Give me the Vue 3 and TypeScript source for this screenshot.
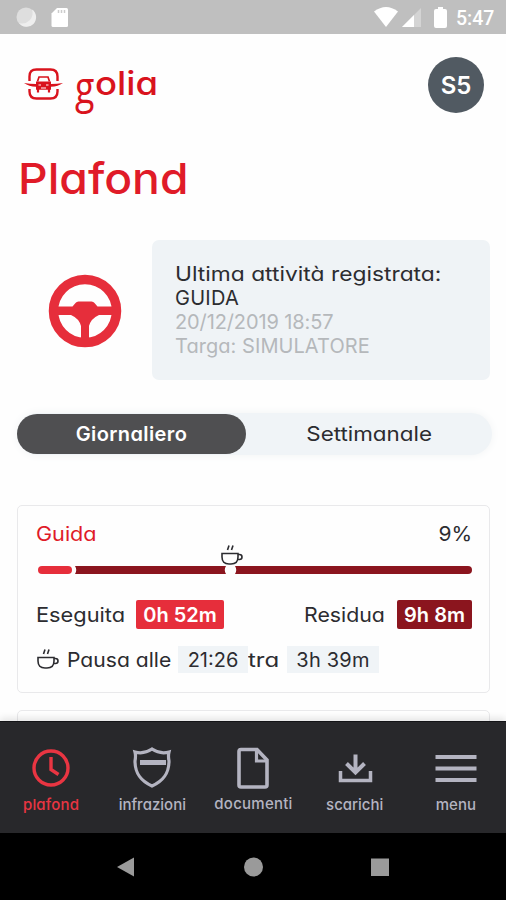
<script setup lang="ts">
interface Tab {
  id: string
  label: string
}

const tabs: Tab[] = [
  { id: 'plafond', label: 'plafond' },
  { id: 'infrazioni', label: 'infrazioni' },
  { id: 'documenti', label: 'documenti' },
  { id: 'scarichi', label: 'scarichi' },
  { id: 'menu', label: 'menu' },
]
const active = 'plafond'
</script>

<template>
  <div class="screen">
    <header class="status">
      <svg class="status-left" width="60" height="34" viewBox="0 0 60 34">
        <circle cx="16" cy="17" r="9.5" fill="#dedede" />
        <path d="M22 9.5a9.5 9.5 0 1 1-13 13.500a10.500 10.500 0 0 0 13-13.500z" fill="#eeeeee" />
        <path d="M47 8h9.500q1.500 0 1.500 1.500v16q0 1.500-1.500 1.500h-13.500q-1.500 0-1.500-1.500v-12z" fill="#fff" />
        <path d="M48.500 10v3M51.500 10v3M54.500 10v3" stroke="#ccc" stroke-width="1.500" />
      </svg>
      <div class="status-right">
        <svg width="74" height="34" viewBox="0 0 74 34">
          <path d="M0 11.500Q12 2.500 24 11.500L12 27z" fill="#fff" />
          <path d="M47 8v19h-19z" fill="#d4d4d4" />
          <path d="M40 15v12h-12z" fill="#fff" />
          <path d="M64 7h5v2h2q2 0 2 2v15q0 2-2 2h-9q-2 0-2-2v-15q0-2 2-2h2z" fill="#fff" />
        </svg>
        <span class="clock">5:47</span>
      </div>
    </header>

    <main class="content">
      <div class="brand-row">
        <div class="brand">
          <svg width="42" height="34" viewBox="0 0 42 34" fill="none" stroke="#d9131d">
            <path d="M5.500 14V9.500q0-7 7-7h14q7 0 7 7v4.500M5.500 22v2.500q0 7 7 7h14q7 0 7-7v-2.500" stroke-width="2.400" />
            <path d="M13.500 14.500l1.500-4.500h9l1.500 4.500" stroke-width="1.700" />
            <path d="M0 16q6 1 12 1v-2.500h15v2.500q6 0 12-1q-5 3.500-12 3.800v3h-15v-3q-7-.3-12-3.800z" fill="#d9131d" stroke="none" />
            <path d="M14 22v3.500M25 22v3.500" stroke-width="2.200" />
            <path d="M14.500 18h2.500M22 18h2.500M17 21h5" stroke="#fff" stroke-width="1.100" />
          </svg>
          <span class="wordmark"><span class="wordmark-g">g</span><span class="wordmark-rest">olia</span></span>
        </div>
        <div class="avatar">S5</div>
      </div>

      <h1 class="title">Plafond</h1>

      <section class="activity">
        <svg class="wheel" width="74" height="74" viewBox="0 0 74 74">
          <circle cx="37" cy="37" r="31.500" fill="none" stroke="#e62e3b" stroke-width="9.500" />
          <path d="M7 32.500h17.500l3-3.500q1-1.500 3-1.500h13q2 0 3 1.500l3 3.500h17.500v8.500h-16q-8 3.500-10 11v15h-8v-15q-2-7.500-10-11h-16z" fill="#e62e3b" />
        </svg>
        <div class="activity-card">
          <p class="line dark first">Ultima attività registrata:</p>
          <p class="line dark kind">GUIDA</p>
          <p class="line date">20/12/2019 18:57</p>
          <p class="line plate">Targa: SIMULATORE</p>
        </div>
      </section>

      <div class="switch">
        <button class="option selected">Giornaliero</button>
        <button class="option"><span class="weekly">Settimanale</span></button>
      </div>

      <section class="card">
        <div class="card-head">
          <span class="card-title">Guida</span>
          <span class="percent">9%</span>
        </div>
        <div class="progress">
          <div class="done"></div>
          <div class="part before"></div>
          <div class="part after"></div>
          <svg class="cup marker" width="24" height="24" viewBox="0 0 24 24">
            <path d="M2 9.500h16v3.500q0 7-7 7h-2q-7 0-7-7zM18 10.500h1.500q2.500 0 2.500 2.500t-2.500 2.500h-2" />
            <path d="M9 1.500l-1.500 4.500M13 1.500l-1.500 4.500" />
          </svg>
        </div>
        <div class="totals">
          <span class="label executed">Eseguita</span>
          <span class="badge red">0h 52m</span>
          <span class="label residual">Residua</span>
          <span class="badge maroon">9h 8m</span>
        </div>
        <div class="pause">
          <svg class="cup" width="24" height="24" viewBox="0 0 24 24">
            <path d="M2 9.500h16v3.500q0 7-7 7h-2q-7 0-7-7zM18 10.500h1.500q2.500 0 2.500 2.500t-2.500 2.500h-2" />
            <path d="M9 1.500l-1.500 4.500M13 1.500l-1.500 4.500" />
          </svg>
          <span class="label pausa">Pausa alle</span>
          <span class="chip at">21:26</span>
          <span class="label tra">tra</span>
          <span class="chip in">3h 39m</span>
        </div>
      </section>
      <section class="card next"></section>
    </main>

    <nav class="tabs">
      <a v-for="tab in tabs" :key="tab.id" class="tab" :class="[tab.id, { active: tab.id === active }]">
        <svg class="tab-icon" width="44" height="44" viewBox="0 0 44 44">
          <template v-if="tab.id === 'plafond'">
            <circle cx="22" cy="22" r="17" />
            <path d="M22 11v12.500l7.500 5" />
          </template>
          <template v-else-if="tab.id === 'infrazioni'">
            <path d="M5 6q9 2.500 17-3q8 5.500 17 3q-1 4 0 9c0 13-6 20-17 25c-11-5-17-12-17-25q1-5 0-9z" stroke-width="3.200" />
            <path d="M10 16.500h26" stroke-width="5" />
          </template>
          <template v-else-if="tab.id === 'documenti'">
            <path d="M10 3.500h16l10 10.500v25q0 2-2 2h-24q-2 0-2-2v-33.500q0-2 2-2z" stroke-width="3.600" />
            <path d="M25.500 4v11h10" stroke-width="3.200" />
          </template>
          <template v-else-if="tab.id === 'scarichi'">
            <path d="M22.500 8.500v18M13.500 17.500l9 9l9-9" stroke-width="4" />
            <path d="M7.500 25v9.500h30v-9.500" stroke-width="3.500" />
          </template>
          <path v-else d="M1.500 11h41M1.500 22.500h41M1.500 34h41" stroke-width="3.800" />
        </svg>
        <span class="tab-label">{{ tab.label }}</span>
      </a>
    </nav>

    <footer class="system">
      <svg width="20" height="20" viewBox="0 0 20 20"><path d="M1 10L18 0.500v19z" fill="#9a9a9a" /></svg>
      <svg width="20" height="20" viewBox="0 0 20 20"><circle cx="10.500" cy="10" r="9.500" fill="#9a9a9a" /></svg>
      <svg width="20" height="20" viewBox="0 0 20 20"><path d="M1 1.500h18v17.500h-18z" fill="#9a9a9a" /></svg>
    </footer>
  </div>
</template>

<style>
body {
  margin: 0;
  background: #fff;
}
</style>

<style scoped>
.screen {
  box-sizing: border-box;
  width: 506px;
  height: 900px;
  display: flex;
  flex-direction: column;
  overflow: hidden;
  background: #fefefe;
  color: #2c2c30;
  font-family: Inter, 'Liberation Sans', sans-serif;
  font-feature-settings: 'cv11' 1;
  font-size: 20px;
  white-space: nowrap;
}
.status {
  flex: none;
  height: 34px;
  display: flex;
  justify-content: space-between;
  background: #bfbfbf;
}
.status-left {
  margin-left: 10px;
}
.status-right {
  display: flex;
  align-items: center;
  width: 132px;
}
.clock {
  margin: 3px 0 0 8px;
  color: #fff;
  font: 500 19.500px/34px Roboto, sans-serif;
}
.content {
  flex: 1;
  min-height: 0;
  overflow: hidden;
  padding: 0 16px 0 17px;
}
.brand-row {
  height: 56px;
  margin-top: 23px;
  display: flex;
  justify-content: space-between;
}
.brand {
  display: flex;
  padding: 10px 0 0 7px;
}
.wordmark {
  display: flex;
  height: 44px;
  margin: -3px 0 0 9px;
  color: #d9131d;
  font-size: 32px;
  font-weight: 500;
  line-height: 40px;
}
.wordmark-rest {
  transform: scaleX(1.14);
  transform-origin: left;
}
.wordmark-g {
  width: 20px;
  font-family: 'Open Sans', sans-serif;
  font-size: 43px;
  line-height: 46px;
  transform: scaleX(0.83);
  transform-origin: left;
}
.avatar {
  width: 56px;
  height: 56px;
  margin-right: 6px;
  border-radius: 50%;
  background: #515a62;
  color: #fff;
  font-size: 24px;
  font-weight: 600;
  line-height: 57px;
  text-align: center;
}
.title {
  height: 56px;
  margin: 38px 0 0 1px;
  color: #e01b28;
  font-size: 43px;
  font-weight: 500;
  line-height: 55px;
  transform: scaleX(1.075);
  transform-origin: left;
}
.activity {
  height: 140px;
  margin-top: 33px;
  display: flex;
}
.wheel {
  margin: 34px 30px 0 31px;
}
.activity-card {
  flex: 1;
  box-sizing: border-box;
  padding: 22px 0 0 23px;
  border-radius: 7px;
  background: #eff3f6;
}
.line {
  height: 24px;
  margin: 0;
  color: #b5b8bb;
  line-height: 25px;
}
.line.dark {
  color: #2c2c30;
}
.first {
  transform: scaleX(1.14);
  transform-origin: left;
}
.kind {
  letter-spacing: 0.250px;
}
.date {
  letter-spacing: -0.120px;
}
.plate {
  letter-spacing: 0.060px;
}
.switch {
  width: 475px;
  height: 42px;
  margin-top: 33px;
  display: flex;
  align-items: center;
  border-radius: 21px;
  background: #f0f4f7;
  box-shadow: 0 0 10px #f2f4f5;
}
.option {
  flex: 1;
  height: 42px;
  padding: 0;
  border: 0;
  background: none;
  color: #2c2c30;
  font: inherit;
  font-feature-settings: inherit;
  line-height: 42px;
}
.weekly {
  display: inline-block;
  transform: scaleX(1.12);
}
.option.selected {
  flex: 0 0 229px;
  height: 40px;
  border-radius: 20px;
  background: #4f4f51;
  color: #fff;
  font-weight: 600;
  line-height: 40px;
  letter-spacing: 0.400px;
}
.card {
  box-sizing: border-box;
  height: 188px;
  margin-top: 50px;
  padding: 0 17px 0 18px;
  border: 1.500px solid #e9e9eb;
  border-radius: 5px;
}
.card.next {
  margin-top: 17px;
}
.card-head {
  height: 24px;
  margin-top: 16px;
  display: flex;
  justify-content: space-between;
  line-height: 25px;
}
.card-title {
  color: #e01b28;
  transform: scaleX(1.08);
  transform-origin: left;
}
.percent {
  transform: scaleX(1.05);
  transform-origin: right;
}
.progress {
  position: relative;
  height: 8px;
  margin: 20px 0 0 2px;
  display: flex;
}
.done {
  width: 34px;
  border-radius: 4px;
  background: #e62e3b;
}
.part {
  background: #8b151e;
}
.before {
  width: 151px;
  margin-left: 3px;
  clip-path: path('M0 0H151Q148.500 4 151 8H0Q2.500 4 0 0Z');
}
.after {
  flex: 1;
  margin-left: 9px;
  border-radius: 0 4px 4px 0;
  clip-path: path('M0 0H300V8H0Q2.500 4 0 0Z');
}
.cup {
  fill: none;
  stroke: #2c2c30;
  stroke-width: 1.600;
}
.marker {
  position: absolute;
  left: 182px;
  top: -22px;
}
.totals {
  height: 30px;
  margin-top: 26px;
  display: flex;
  line-height: 31px;
}
.badge {
  height: 29px;
  border-radius: 2px;
  color: #fff;
  font-weight: 600;
  line-height: 30px;
  text-align: center;
}
.red {
  width: 88px;
  background: #e62e3b;
}
.maroon {
  width: 75px;
  background: #8b151e;
}
.label {
  transform-origin: left;
}
.executed {
  width: 100px;
  transform: scaleX(1.09);
}
.residual {
  width: 93px;
  margin-left: auto;
  transform: scaleX(1.065);
}
.pause {
  height: 28px;
  margin-top: 16px;
  display: flex;
  line-height: 29px;
}
.pause .cup {
  margin-top: 2px;
}
.pausa {
  width: 111px;
  margin-left: 7px;
  transform: scaleX(1.055);
}
.chip {
  height: 27px;
  background: #f0f4f7;
  line-height: 29px;
  text-align: center;
}
.at {
  width: 70px;
}
.tra {
  width: 39px;
  transform: scaleX(1.2);
}
.in {
  width: 92px;
  letter-spacing: 0.200px;
}
.tabs {
  flex: none;
  box-sizing: border-box;
  height: 112px;
  display: grid;
  grid-template-columns: repeat(5, 1fr);
  border-top: 1px solid #141417;
  background: #28282b;
  box-shadow: 0 -3px 7px rgba(0, 0, 0, 0.1);
  z-index: 1;
}
.tab {
  display: flex;
  flex-direction: column;
  align-items: center;
  padding: 24px 0 0 1px;
  color: #b4b4c1;
}
.tab.active {
  color: #e93542;
}
.tab-icon {
  fill: none;
  stroke: currentColor;
  stroke-width: 3.400;
}
.tab-label {
  margin-top: 5px;
  font-size: 15px;
  font-weight: 500;
  line-height: 20px;
}
.plafond .tab-label {
  letter-spacing: 0.200px;
}
.documenti .tab-label {
  margin-top: 4px;
  letter-spacing: 0.250px;
}
.system {
  flex: none;
  height: 67px;
  display: grid;
  grid-template-columns: repeat(3, 20px);
  justify-content: center;
  align-items: center;
  column-gap: 107px;
  background: #000;
}
</style>
